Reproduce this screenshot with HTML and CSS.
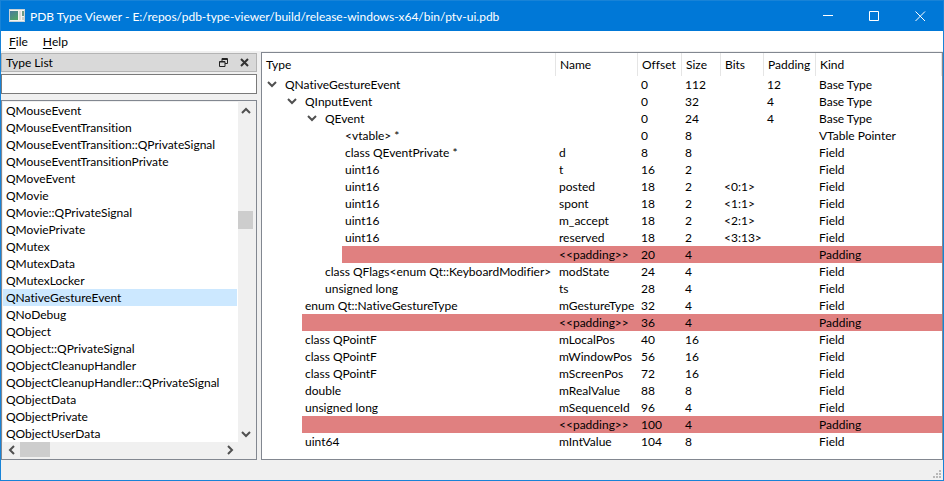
FILE: index.html
```html
<!DOCTYPE html>
<html lang="en">
<head>
<meta charset="utf-8">
<title>PDB Type Viewer</title>
<link rel="stylesheet" href="styles.css">
</head>
<body>
<svg class="defs" aria-hidden="true">
  <symbol id="chevron" viewBox="0 0 10 8"><path d="M1 2l4 4 4-4" fill="none" stroke="#505050" stroke-width="2"/></symbol>
</svg>
<div class="window">
  <header class="titlebar">
    <svg class="app-icon" viewBox="0 0 16 14" aria-hidden="true">
      <defs><linearGradient id="pane" x1="0" y1="0" x2="0.6" y2="1"><stop offset="0" stop-color="#4a7a9c"/><stop offset="1" stop-color="#4fa06a"/></linearGradient></defs>
      <rect x="0.5" y="0.5" width="15" height="12" fill="#f4f4f0" stroke="#c8d2d8"/>
      <rect x="1" y="2" width="8" height="9" fill="url(#pane)"/>
      <rect x="10" y="2" width="2" height="9" fill="#dcdcd8"/>
      <rect x="13" y="2" width="2" height="5" fill="#6f9c86"/>
      <rect x="13" y="8" width="2" height="3" fill="#c9cfc8"/>
    </svg>
    <h1 class="title">PDB Type Viewer - E:/repos/pdb-type-viewer/build/release-windows-x64/bin/ptv-ui.pdb</h1>
    <button class="caption" aria-label="Minimize"><svg viewBox="0 0 11 11"><path d="M0 4.5h10"/></svg></button>
    <button class="caption" aria-label="Maximize"><svg viewBox="0 0 11 11"><path d="M.5.5h9v9h-9z"/></svg></button>
    <button class="caption" aria-label="Close"><svg viewBox="0 0 11 11"><path d="M.5.5l9.500 9.500M10 .5L.5 10"/></svg></button>
  </header>
  <nav class="menubar">
    <button class="menu"><u>F</u>ile</button>
    <button class="menu"><u>H</u>elp</button>
  </nav>
  <main class="workspace">
    <section class="dock">
      <div class="dock-title">
        <h2 class="dock-name"><label for="filter">Type List</label></h2>
        <button class="dock-button" aria-label="Float"><svg viewBox="0 0 9 9"><path d="M3 3V.5h5.500v5H6M3 1.500h5.500M.5 3.500H6v5H.5zM.5 4H6" fill="none" stroke="#222"/></svg></button>
        <button class="dock-button" aria-label="Close dock"><svg viewBox="0 0 9 9"><path d="M1 1l7 7M8 1L1 8" stroke="#333" stroke-width="2"/></svg></button>
      </div>
      <input class="filter" id="filter" type="text">
      <div class="list-frame">
        <ul class="types" role="listbox" aria-label="Types">
          <li role="option">QMouseEvent</li>
          <li role="option">QMouseEventTransition</li>
          <li role="option">QMouseEventTransition::QPrivateSignal</li>
          <li role="option">QMouseEventTransitionPrivate</li>
          <li role="option">QMoveEvent</li>
          <li role="option">QMovie</li>
          <li role="option">QMovie::QPrivateSignal</li>
          <li role="option">QMoviePrivate</li>
          <li role="option">QMutex</li>
          <li role="option">QMutexData</li>
          <li role="option">QMutexLocker</li>
          <li role="option" aria-selected="true">QNativeGestureEvent</li>
          <li role="option">QNoDebug</li>
          <li role="option">QObject</li>
          <li role="option">QObject::QPrivateSignal</li>
          <li role="option">QObjectCleanupHandler</li>
          <li role="option">QObjectCleanupHandler::QPrivateSignal</li>
          <li role="option">QObjectData</li>
          <li role="option">QObjectPrivate</li>
          <li role="option">QObjectUserData</li>
        </ul>
        <div class="bar vertical">
          <button class="arrow up" aria-label="Scroll up"><svg><use href="#chevron"/></svg></button>
          <div class="track"><div class="thumb"></div></div>
          <button class="arrow" aria-label="Scroll down"><svg><use href="#chevron"/></svg></button>
        </div>
        <div class="bar horizontal">
          <button class="arrow left" aria-label="Scroll left"><svg><use href="#chevron"/></svg></button>
          <div class="track"><div class="thumb"></div></div>
          <button class="arrow right" aria-label="Scroll right"><svg><use href="#chevron"/></svg></button>
        </div>
      </div>
    </section>
    <section class="tree">
      <table class="layout">
        <colgroup><col class="c-type"><col class="c-name"><col class="c-offset"><col class="c-size"><col class="c-bits"><col class="c-padding"><col></colgroup>
        <thead>
          <tr><th>Type</th><th>Name</th><th>Offset</th><th>Size</th><th>Bits</th><th>Padding</th><th>Kind</th></tr>
        </thead>
        <tbody>
          <tr class="level-0"><td><div class="node"><button class="expander" aria-label="Collapse"><svg><use href="#chevron"/></svg></button>QNativeGestureEvent</div></td><td></td><td>0</td><td>112</td><td></td><td>12</td><td>Base Type</td></tr>
          <tr class="level-1"><td><div class="node"><button class="expander" aria-label="Collapse"><svg><use href="#chevron"/></svg></button>QInputEvent</div></td><td></td><td>0</td><td>32</td><td></td><td>4</td><td>Base Type</td></tr>
          <tr class="level-2"><td><div class="node"><button class="expander" aria-label="Collapse"><svg><use href="#chevron"/></svg></button>QEvent</div></td><td></td><td>0</td><td>24</td><td></td><td>4</td><td>Base Type</td></tr>
          <tr class="level-4"><td><div class="node">&lt;vtable&gt; *</div></td><td></td><td>0</td><td>8</td><td></td><td></td><td>VTable Pointer</td></tr>
          <tr class="level-4"><td><div class="node">class QEventPrivate *</div></td><td>d</td><td>8</td><td>8</td><td></td><td></td><td>Field</td></tr>
          <tr class="level-4"><td><div class="node">uint16</div></td><td>t</td><td>16</td><td>2</td><td></td><td></td><td>Field</td></tr>
          <tr class="level-4"><td><div class="node">uint16</div></td><td>posted</td><td>18</td><td>2</td><td>&lt;0:1&gt;</td><td></td><td>Field</td></tr>
          <tr class="level-4"><td><div class="node">uint16</div></td><td>spont</td><td>18</td><td>2</td><td>&lt;1:1&gt;</td><td></td><td>Field</td></tr>
          <tr class="level-4"><td><div class="node">uint16</div></td><td>m_accept</td><td>18</td><td>2</td><td>&lt;2:1&gt;</td><td></td><td>Field</td></tr>
          <tr class="level-4"><td><div class="node">uint16</div></td><td>reserved</td><td>18</td><td>2</td><td>&lt;3:13&gt;</td><td></td><td>Field</td></tr>
          <tr class="level-4 gap"><td><div class="node"></div></td><td>&lt;&lt;padding&gt;&gt;</td><td>20</td><td>4</td><td></td><td></td><td>Padding</td></tr>
          <tr class="level-3"><td><div class="node">class QFlags&lt;enum Qt::KeyboardModifier&gt;</div></td><td>modState</td><td>24</td><td>4</td><td></td><td></td><td>Field</td></tr>
          <tr class="level-3"><td><div class="node">unsigned long</div></td><td>ts</td><td>28</td><td>4</td><td></td><td></td><td>Field</td></tr>
          <tr class="level-2"><td><div class="node">enum Qt::NativeGestureType</div></td><td>mGestureType</td><td>32</td><td>4</td><td></td><td></td><td>Field</td></tr>
          <tr class="level-2 gap"><td><div class="node"></div></td><td>&lt;&lt;padding&gt;&gt;</td><td>36</td><td>4</td><td></td><td></td><td>Padding</td></tr>
          <tr class="level-2"><td><div class="node">class QPointF</div></td><td>mLocalPos</td><td>40</td><td>16</td><td></td><td></td><td>Field</td></tr>
          <tr class="level-2"><td><div class="node">class QPointF</div></td><td>mWindowPos</td><td>56</td><td>16</td><td></td><td></td><td>Field</td></tr>
          <tr class="level-2"><td><div class="node">class QPointF</div></td><td>mScreenPos</td><td>72</td><td>16</td><td></td><td></td><td>Field</td></tr>
          <tr class="level-2"><td><div class="node">double</div></td><td>mRealValue</td><td>88</td><td>8</td><td></td><td></td><td>Field</td></tr>
          <tr class="level-2"><td><div class="node">unsigned long</div></td><td>mSequenceId</td><td>96</td><td>4</td><td></td><td></td><td>Field</td></tr>
          <tr class="level-2 gap"><td><div class="node"></div></td><td>&lt;&lt;padding&gt;&gt;</td><td>100</td><td>4</td><td></td><td></td><td>Padding</td></tr>
          <tr class="level-2"><td><div class="node">uint64</div></td><td>mIntValue</td><td>104</td><td>8</td><td></td><td></td><td>Field</td></tr>
        </tbody>
      </table>
    </section>
  </main>
  <footer class="statusbar">
    <svg class="grip" viewBox="0 0 8 8" aria-hidden="true"><path d="M6 0h2v2H6zM3 3h2v2H3zM6 3h2v2H6zM0 6h2v2H0zM3 6h2v2H3zM6 6h2v2H6z" fill="#b8b8b8"/></svg>
  </footer>
</div>
</body>
</html>
```

FILE: styles.css
```css
* {
  box-sizing: border-box;
}

body {
  margin: 0;
  font: 12px/17px Lato, "Open Sans", sans-serif;
  font-variant-ligatures: none;
  color: #000;
}

button {
  display: flex;
  align-items: center;
  justify-content: center;
  padding: 0;
  border: 0;
  background: none;
  font: inherit;
  color: inherit;
}

h1,
h2 {
  margin: 0;
  font: inherit;
}

.defs {
  display: none;
}

.window {
  display: flex;
  flex-direction: column;
  min-height: 100vh;
  border: 1px solid #1883d7;
  background: #f0f0f0;
}

.titlebar {
  display: flex;
  align-items: center;
  height: 30px;
  padding-left: 8px;
  background: #0078d7;
  color: #fff;
}

.app-icon {
  width: 16px;
  height: 14px;
}

.title {
  flex: 1;
  min-width: 0;
  margin-left: 5px;
  overflow: hidden;
  white-space: nowrap;
}

.caption {
  width: 46px;
  height: 30px;
}

.caption svg {
  width: 11px;
  height: 11px;
  fill: none;
  stroke: #fff;
}

.menubar {
  display: flex;
  align-items: flex-end;
  gap: 15px;
  height: 20px;
  padding-left: 8px;
  background: #fff;
}

.menu {
  height: 19px;
}

.menu u {
  text-underline-offset: 2px;
}

.workspace {
  display: flex;
  flex: 1;
  gap: 4px;
  padding-top: 1px;
}

.dock {
  display: flex;
  flex-direction: column;
  width: 256px;
  padding-top: 1px;
}

.dock-title {
  display: flex;
  align-items: center;
  gap: 12px;
  height: 19px;
  padding: 0 7px 0 4px;
  border: 1px solid #b4b4b4;
  background: #d9d9d9;
}

.dock-name {
  flex: 1;
}

.dock-button svg {
  width: 9px;
  height: 9px;
}

.filter {
  height: 20px;
  margin: 2px 0 6px;
  padding: 0 4px;
  border: 1px solid #7a7a7a;
  background: #fff;
  font: inherit;
}

.list-frame {
  display: grid;
  flex: 1;
  grid-template: 1fr 16px / 1fr 17px;
  padding: 1px;
  border: 1px solid #828790;
  background: #f0f0f0;
}

.types {
  margin: 0;
  padding: 0 1px 0 0;
  overflow: hidden;
  background: #fff;
  list-style: none;
  white-space: nowrap;
}

.types li {
  height: 17px;
  padding-left: 3px;
}

.types [aria-selected="true"] {
  background: #cce8ff;
}

.bar {
  display: flex;
}

.vertical {
  flex-direction: column;
  width: 15px;
}

.horizontal {
  height: 15px;
}

.arrow {
  flex: 0 0 17px;
}

.arrow svg,
.expander svg {
  width: 10px;
  height: 8px;
}

.up svg {
  transform: rotate(180deg);
}

.left svg {
  transform: rotate(90deg);
}

.right svg {
  transform: rotate(-90deg);
}

.track {
  display: flex;
  flex: 1;
}

.vertical .track {
  flex-direction: column;
}

.thumb {
  background: #cdcdcd;
}

.vertical .thumb {
  height: 18px;
  margin-top: 92px;
}

.horizontal .thumb {
  width: 30px;
}

.tree {
  flex: 1;
  min-width: 0;
  border: 1px solid #828790;
  background: #fff;
}

.layout {
  width: 100%;
  border-collapse: separate;
  border-spacing: 0;
  table-layout: fixed;
}

.c-type {
  width: 294px;
}

.c-name {
  width: 82px;
}

.c-offset {
  width: 44px;
}

.c-size {
  width: 39px;
}

.c-bits {
  width: 43px;
}

.c-padding {
  width: 52px;
}

th {
  height: 23px;
  padding: 0 0 0 4px;
  border-right: 1px solid #e5e5e5;
  font-weight: normal;
  text-align: left;
  white-space: nowrap;
}

td {
  height: 17px;
  padding: 0 0 0 3px;
  white-space: nowrap;
}

td:first-child {
  padding: 0;
}

.node {
  display: flex;
  height: 17px;
  padding-left: 3px;
}

.expander {
  width: 20px;
  height: 15px;
  margin-left: -3px;
  margin-right: 3px;
}

.level-1 .node {
  margin-left: 20px;
}

.level-2 .node {
  margin-left: 40px;
}

.level-3 .node {
  margin-left: 60px;
}

.level-4 .node {
  margin-left: 80px;
}

.gap td:not(:first-child),
.gap .node {
  background: #e08080;
}

.statusbar {
  display: flex;
  align-items: flex-end;
  justify-content: flex-end;
  height: 20px;
  padding: 2px;
}

.grip {
  width: 8px;
  height: 8px;
}
```
